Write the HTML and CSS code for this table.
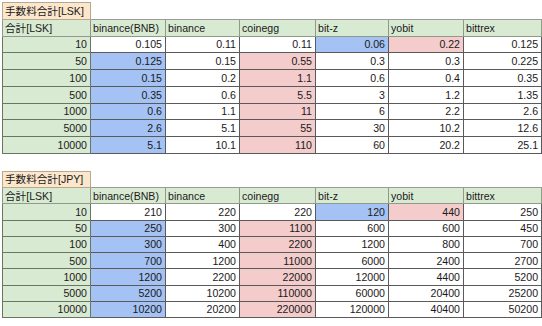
FILE: index.html
```
<!DOCTYPE html>
<html>
<head>
<meta charset="utf-8">
<link rel="stylesheet" href="styles.css">
</head>
<body>
<div class="sheet">
<table class="fee t1">
<colgroup><col class="c0"><col class="c1"><col class="c2"><col class="c3"><col class="c4"><col class="c5"><col class="c6"></colgroup>
<tr class="title"><td class="ttl">手数料合計[LSK]</td><td class="blank" colspan="6"></td></tr>
<tr class="head"><td>合計[LSK]</td><td>binance(BNB)</td><td>binance</td><td>coinegg</td><td>bit-z</td><td>yobit</td><td>bittrex</td></tr>
<tr><th>10</th><td>0.105</td><td>0.11</td><td>0.11</td><td class="b">0.06</td><td class="r">0.22</td><td>0.125</td></tr>
<tr><th>50</th><td class="b">0.125</td><td>0.15</td><td class="r">0.55</td><td>0.3</td><td>0.3</td><td>0.225</td></tr>
<tr><th>100</th><td class="b">0.15</td><td>0.2</td><td class="r">1.1</td><td>0.6</td><td>0.4</td><td>0.35</td></tr>
<tr><th>500</th><td class="b">0.35</td><td>0.6</td><td class="r">5.5</td><td>3</td><td>1.2</td><td>1.35</td></tr>
<tr><th>1000</th><td class="b">0.6</td><td>1.1</td><td class="r">11</td><td>6</td><td>2.2</td><td>2.6</td></tr>
<tr><th>5000</th><td class="b">2.6</td><td>5.1</td><td class="r">55</td><td>30</td><td>10.2</td><td>12.6</td></tr>
<tr><th>10000</th><td class="b">5.1</td><td>10.1</td><td class="r">110</td><td>60</td><td>20.2</td><td>25.1</td></tr>
</table>
<table class="fee t2">
<colgroup><col class="c0"><col class="c1"><col class="c2"><col class="c3"><col class="c4"><col class="c5"><col class="c6"></colgroup>
<tr class="title"><td class="ttl">手数料合計[JPY]</td><td class="blank" colspan="6"></td></tr>
<tr class="head"><td>合計[LSK]</td><td>binance(BNB)</td><td>binance</td><td>coinegg</td><td>bit-z</td><td>yobit</td><td>bittrex</td></tr>
<tr><th>10</th><td>210</td><td>220</td><td>220</td><td class="b">120</td><td class="r">440</td><td>250</td></tr>
<tr><th>50</th><td class="b">250</td><td>300</td><td class="r">1100</td><td>600</td><td>600</td><td>450</td></tr>
<tr><th>100</th><td class="b">300</td><td>400</td><td class="r">2200</td><td>1200</td><td>800</td><td>700</td></tr>
<tr><th>500</th><td class="b">700</td><td>1200</td><td class="r">11000</td><td>6000</td><td>2400</td><td>2700</td></tr>
<tr><th>1000</th><td class="b">1200</td><td>2200</td><td class="r">22000</td><td>12000</td><td>4400</td><td>5200</td></tr>
<tr><th>5000</th><td class="b">5200</td><td>10200</td><td class="r">110000</td><td>60000</td><td>20400</td><td>25200</td></tr>
<tr><th>10000</th><td class="b">10200</td><td>20200</td><td class="r">220000</td><td>120000</td><td>40400</td><td>50200</td></tr>
</table>
</div>
</body>
</html>
```
FILE: styles.css
```
html, body {
  margin: 0;
  padding: 0;
  background: #ffffff;
}
.sheet {
  padding: 2px 0 0 2px;
  display: flex;
  flex-direction: column;
  gap: 17px;
  font-family: "Liberation Sans", Arial, "Noto Sans CJK JP", sans-serif;
  font-size: 10.6px;
  color: #1a1a1a;
}
.fee {
  border-collapse: collapse;
  table-layout: fixed;
  width: 539px;
}
.c0 { width: 88px; }
.c1 { width: 75px; }
.c2 { width: 74px; }
.c3 { width: 76px; }
.c4 { width: 73px; }
.c5 { width: 75px; }
.c6 { width: 78px; }
.fee td, .fee th {
  border: 1px solid #5a5a5a;
  padding: 0 3px 0 3px;
  text-align: right;
  font-weight: normal;
  white-space: nowrap;
  overflow: hidden;
  line-height: 14px;
}
.fee tr { height: 16.75px; }
.t2 tr { height: 16.25px; }
.fee th {
  background: #d9ead3;
  border-color: #6b7566;
}
.fee .title td.ttl {
  background: #fde7cc;
  border: 1px solid #b8a88e;
  text-align: left;
  padding-left: 2px;
}
.fee .title td.blank {
  border: none;
  border-left: 1px solid #b8a88e;
  border-bottom: 1px solid #9a9a9a;
}
.fee .head td {
  background: #d9ead3;
  text-align: left;
  padding-left: 2px;
  border-color: #8f9a8a;
}
.fee td.b { background: #a4c2f4; }
.fee td.r { background: #f4cccc; }
```
